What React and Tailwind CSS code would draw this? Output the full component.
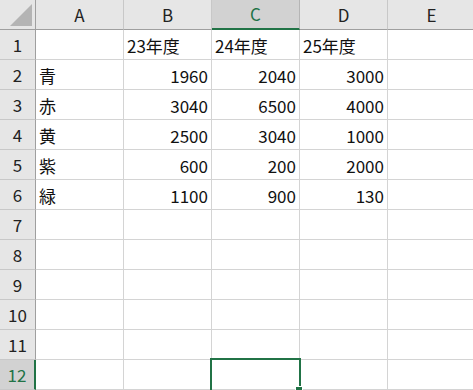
import React from "react";

const cols = ["A", "B", "C", "D", "E"];

const data = [
  ["", "23年度", "24年度", "25年度", ""],
  ["青", 1960, 2040, 3000, ""],
  ["赤", 3040, 6500, 4000, ""],
  ["黄", 2500, 3040, 1000, ""],
  ["紫", 600, 200, 2000, ""],
  ["緑", 1100, 900, 130, ""],
];

const font = { fontFamily: '"Noto Sans CJK JP", "Noto Sans", sans-serif' };

const Cell = ({ value, selected }) => {
  const isNum = typeof value === "number";
  return (
    <div
      className={`relative h-[30px] border-r border-b border-[#d4d4d4] bg-white flex items-center px-[3px] pt-[3px] text-[17px] text-[#111] ${
        isNum ? "justify-end" : "justify-start"
      }`}
    >
      {value}
      {selected && (
        <>
          <div className="absolute left-[-2px] top-[-2px] w-[91px] h-[34px] border-2 border-[#217346] z-10" />
          <div className="absolute left-[83px] top-[26px] w-[8px] h-[8px] bg-[#217346] border border-white z-20" />
        </>
      )}
    </div>
  );
};

export default function App() {
  const rows = Array.from({ length: 12 }, (_, i) => data[i] || ["", "", "", "", ""]);

  return (
    <div className="w-[473px] h-[390px] overflow-hidden bg-white select-none" style={font}>
      <div className="grid grid-cols-[36px_88px_88px_88px_88px_88px]">
        {/* corner */}
        <div className="relative h-[30px] bg-[#e6e6e6] border-r border-b border-[#9f9f9f]">
          <svg className="absolute left-[10px] top-[4px]" width="22" height="22" viewBox="0 0 22 22">
            <polygon points="22,0 22,22 0,22" fill="#b4b4b4" />
          </svg>
        </div>
        {cols.map((c) => (
          <div
            key={c}
            className={`h-[30px] flex items-center justify-center text-[17px] border-r ${
              c === "C"
                ? "bg-[#d2d2d2] text-[#217346] border-b-2 border-b-[#217346] border-r-[#b5b5b5]"
                : "bg-[#e6e6e6] text-[#222] border-b border-b-[#9f9f9f] border-r-[#c8c8c8]"
            }`}
          >
            {c}
          </div>
        ))}

        {rows.map((row, r) => (
          <React.Fragment key={r}>
            <div
              className={`h-[30px] flex items-center justify-center text-[17px] pt-[1px] border-b border-b-[#c8c8c8] ${
                r === 11
                  ? "bg-[#d2d2d2] text-[#217346] border-r-2 border-r-[#217346]"
                  : "bg-[#e6e6e6] text-[#222] border-r border-r-[#9f9f9f]"
              }`}
            >
              {r + 1}
            </div>
            {row.map((v, c) => (
              <Cell key={c} value={v} selected={r === 11 && c === 2} />
            ))}
          </React.Fragment>
        ))}
      </div>
    </div>
  );
}
